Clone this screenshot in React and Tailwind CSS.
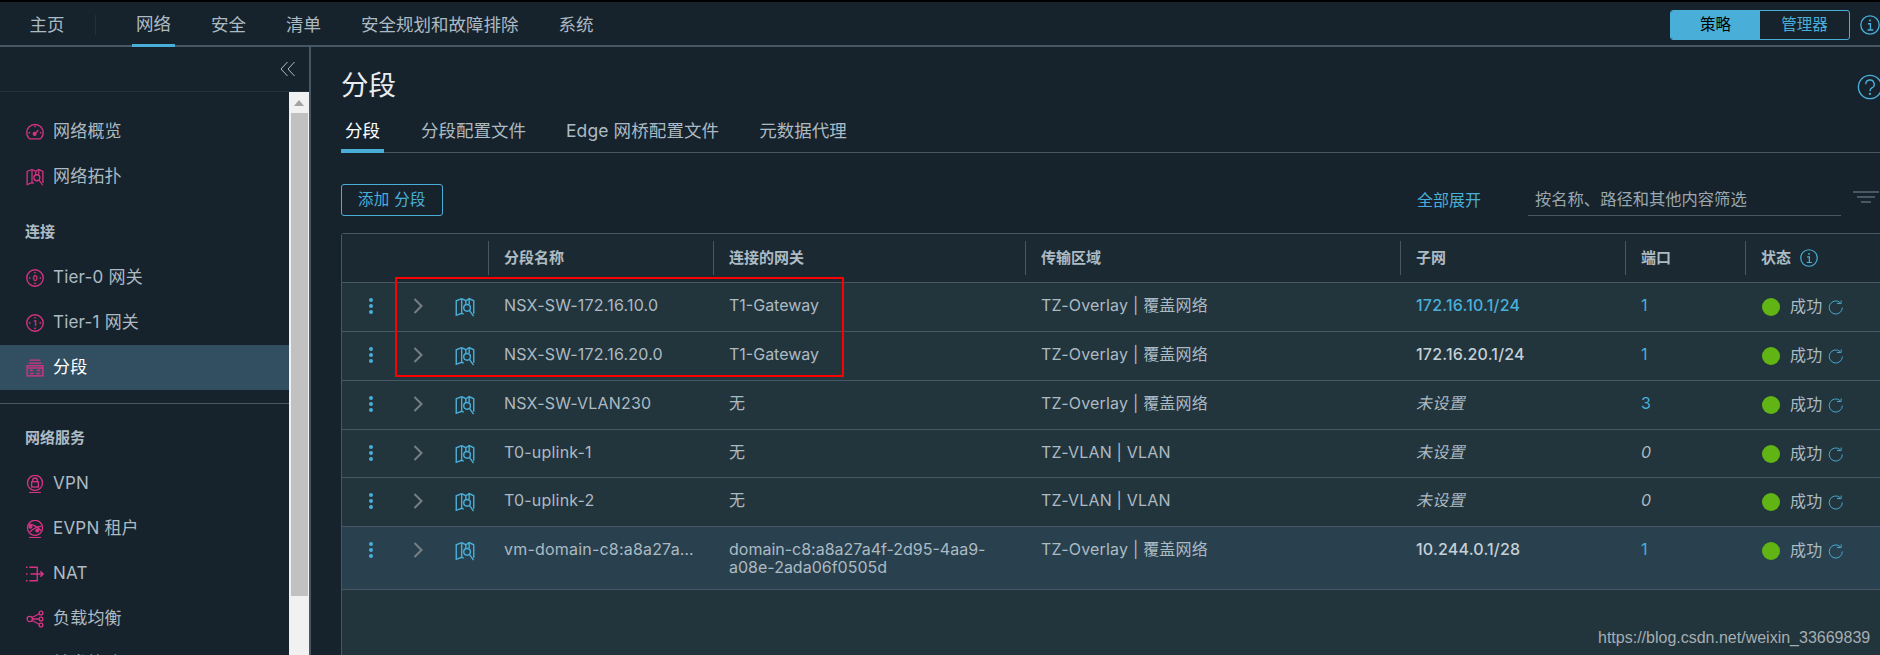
import React from "react";

function Svg({ className, children, strokeWidth = 1.8 }) {
  return (
    <svg viewBox="0 0 24 24" fill="none" stroke="currentColor" strokeWidth={strokeWidth} className={className}>
      {children}
    </svg>
  );
}

function MapIcon({ className }) {
  return (
    <Svg className={className} strokeWidth={1.7}>
      <path d="M8 2 1.500 4.500v17.500L8 19.500l2.500 1" />
      <path d="M8 2v17.500" />
      <path d="M8 2l5 2.500L17 2l5.500 2.500v15.500" />
      <path d="M13 4.500v4" />
      <path d="M17 2v6.500" />
      <circle cx="14.500" cy="13" r="4" />
      <path d="M17.300 16l5 7" />
    </Svg>
  );
}

function GaugeIcon({ className }) {
  return (
    <Svg className={className}>
      <path d="M4 20.500a11 11 0 1 1 16 0 2 2 0 0 1-1.500.7h-13a2 2 0 0 1-1.500-.7z" />
      <path d="M12 14l4.500-4.500" />
      <circle cx="11.500" cy="14.500" r="1.800" fill="currentColor" />
      <path d="M12 3.500v2M3.500 13h2M18.500 13h2" />
    </Svg>
  );
}

function TierIcon({ className, label }) {
  return (
    <Svg className={className}>
      <circle cx="12" cy="12" r="11" />
      <text x="12" y="15.500" textAnchor="middle" fontSize="10" fontWeight="700" fill="currentColor" stroke="none">
        {label}
      </text>
      <path d="M12 3.500l-2 2.200h4zM12 20.500l-2-2.200h4zM3.500 12l2.200-2v4zM20.500 12l-2.200-2v4z" fill="currentColor" stroke="none" />
    </Svg>
  );
}

function SegmentIcon({ className }) {
  return (
    <Svg className={className}>
      <path d="M5 1.500h14M3.500 5.500h17" />
      <rect x="1.500" y="9" width="21" height="13.500" />
      <path d="M1.500 12h21" />
      <path d="M5 15.500h5M7.500 14 5 15.500M14 15.500h5M16.500 14l2.500 1.500M5 19h5M7.500 20.500 10 19M14 19h5M16.500 20.500 14 19" strokeWidth="1.300" />
    </Svg>
  );
}

function VpnIcon({ className }) {
  return (
    <Svg className={className}>
      <circle cx="12" cy="10.500" r="10" />
      <rect x="7.500" y="9" width="9" height="7" />
      <path d="M9 9V7a3 3 0 0 1 6 0v2" />
      <path d="M4 23.500h16" />
    </Svg>
  );
}

function GlobeIcon({ className }) {
  return (
    <Svg className={className}>
      <circle cx="12" cy="10.500" r="10" />
      <path d="M4 5.500c5 0 12 4 16 9M5 16c4-4 9-7 15-7.500" />
      <circle cx="6" cy="9" r="1.800" fill="currentColor" />
      <circle cx="15" cy="14" r="1.800" fill="currentColor" />
      <path d="M4 23.500h16" />
    </Svg>
  );
}

function NatIcon({ className }) {
  return (
    <Svg className={className}>
      <path d="M0 3h2M0 12h2M0 21h2" />
      <path d="M4.500 3H15v18H4.500M6 12h17M19 8.500 23 12l-4 3.500" />
    </Svg>
  );
}

function BalanceIcon({ className }) {
  return (
    <Svg className={className}>
      <circle cx="5" cy="12" r="3.500" />
      <circle cx="20" cy="4" r="2.500" />
      <circle cx="20" cy="12" r="2.500" />
      <circle cx="20" cy="20" r="2.500" />
      <path d="M8 10l9.800-5M8.500 12h9M8 14l9.800 5" />
    </Svg>
  );
}

function Info({ className }) {
  return (
    <svg viewBox="0 0 24 24" fill="none" stroke="#49afd9" strokeWidth="1.600" className={className}>
      <circle cx="12" cy="12" r="11" />
      <path d="M9.500 10.500H12.500V18M9 18h7" />
      <circle cx="12" cy="6.500" r="1.200" fill="#49afd9" stroke="none" />
    </svg>
  );
}

function Refresh() {
  return (
    <svg viewBox="0 0 16 16" fill="none" stroke="#49afd9" strokeWidth="1" className="ml-[6px] mt-[2px] h-[15px] w-[15px] shrink-0">
      <path d="M13 2.800A7 7 0 1 0 15.300 8" />
      <path d="M9.500 3.800h4.500V0.500" />
    </svg>
  );
}

function NavItem({ icon, label, active }) {
  return (
    <div
      className={
        "flex h-[45px] items-center gap-[9px] pl-[26px] text-[17px] tracking-[0.2px] " +
        (active ? "bg-[#324f62] text-white" : "text-[#acbac3]")
      }
    >
      <span className="flex h-[18px] w-[18px] shrink-0 items-center justify-center text-[#d63384]">{icon}</span>
      <span>{label}</span>
    </div>
  );
}

function SectionTitle({ children }) {
  return <div className="flex h-[56px] items-center pl-[25px] pt-[10px] text-[15px] font-bold text-[#adbbc4]">{children}</div>;
}

const rows = [
  { name: "NSX-SW-172.16.10.0", gateway: "T1-Gateway", zone: "TZ-Overlay | 覆盖网络", subnet: "172.16.10.1/24", link: true, ports: "1", height: "h-[49px]" },
  { name: "NSX-SW-172.16.20.0", gateway: "T1-Gateway", zone: "TZ-Overlay | 覆盖网络", subnet: "172.16.20.1/24", ports: "1", height: "h-[49px]" },
  { name: "NSX-SW-VLAN230", gateway: "无", zone: "TZ-Overlay | 覆盖网络", subnet: "未设置", unset: true, ports: "3", height: "h-[49px]" },
  { name: "T0-uplink-1", gateway: "无", zone: "TZ-VLAN | VLAN", subnet: "未设置", unset: true, ports: "0", height: "h-[48px]" },
  { name: "T0-uplink-2", gateway: "无", zone: "TZ-VLAN | VLAN", subnet: "未设置", unset: true, ports: "0", height: "h-[49px]" },
  {
    name: "vm-domain-c8:a8a27a…",
    gateway: "domain-c8:a8a27a4f-2d95-4aa9-a08e-2ada06f0505d",
    zone: "TZ-Overlay | 覆盖网络",
    subnet: "10.244.0.1/28",
    ports: "1",
    selected: true,
    height: "h-[63px]",
  },
];

const cols = "grid grid-cols-[146px_225px_312px_375px_225px_120px_1fr]";

function Row({ row }) {
  return (
    <div className={cols + " border-b border-[#485764] text-[16px] leading-[18px] tracking-[0.2px] text-[#acbac3] " + row.height + (row.selected ? " bg-[#29414e]" : "")}>
      <div className="flex items-start pt-[14px]">
        <span className="ml-[27px] flex h-[18px] w-[4px] flex-col justify-between py-[1px]">
          <i className="h-[4px] w-[4px] rounded-full bg-[#49afd9]" />
          <i className="h-[4px] w-[4px] rounded-full bg-[#49afd9]" />
          <i className="h-[4px] w-[4px] rounded-full bg-[#49afd9]" />
        </span>
        <svg viewBox="0 0 10 16" fill="none" stroke="#777f85" strokeWidth="2" className="ml-[40px] mt-[1px] h-[16px] w-[10px]">
          <path d="M1.500 1 8.500 8l-7 7" />
        </svg>
        <MapIcon className="ml-[32px] h-[20px] w-[20px] text-[#49afd9]" />
      </div>
      <div className="pl-[16px] pt-[13px]">{row.name}</div>
      <div className="pl-[16px] pr-[30px] pt-[13px] tracking-normal [overflow-wrap:anywhere]">{row.gateway}</div>
      <div className="pl-[16px] pt-[13px]">{row.zone}</div>
      <div
        className={
          "pl-[16px] pt-[13px] " +
          (row.link ? "font-medium text-[#49afd9]" : row.unset ? "italic" : "font-medium text-[#c5d0d6]")
        }
      >
        {row.subnet}
      </div>
      <div className={"pl-[16px] pt-[13px] " + (row.ports === "0" ? "italic" : "text-[#49afd9]")}>{row.ports}</div>
      <div className="flex items-start pl-[17px] pt-[15px]">
        <span className="h-[18px] w-[18px] shrink-0 rounded-full bg-[#60b515]" />
        <span className="-mt-[1px] ml-[10px]">成功</span>
        <Refresh />
      </div>
    </div>
  );
}

export default function App() {
  return (
    <div className="relative flex h-[655px] w-[1880px] flex-col overflow-hidden border-t-2 border-black bg-[#17232c] font-['Inter','Noto_Sans_CJK_SC',sans-serif]">
      <header className="flex h-[45px] shrink-0 items-stretch border-b-2 border-[#485764] pt-[3px] text-[17.500px] text-[#acbac3]">
        <div className="flex w-[95px] items-center justify-center pr-[1px]">
          <span>主页</span>
        </div>
        <div className="my-[10px] w-px bg-[#22303a]" />
        <nav className="ml-[36px] flex gap-[40px]">
          <div className="-mb-[2px] -mr-[4px] flex items-center border-b-[3px] border-[#49afd9] px-[4px]">网络</div>
          <div className="flex items-center">安全</div>
          <div className="flex items-center">清单</div>
          <div className="flex items-center">安全规划和故障排除</div>
          <div className="flex items-center">系统</div>
        </nav>
        <div className="ml-auto flex items-center">
          <div className="flex h-[30px] w-[180px] overflow-hidden rounded-[3px] border border-[#49afd9] text-[15.500px]">
            <div className="flex w-[89px] items-center justify-center bg-[#49afd9] text-black">策略</div>
            <div className="flex flex-1 items-center justify-center text-[#49afd9]">管理器</div>
          </div>
          <Info className="ml-[10px] h-[20px] w-[20px] shrink-0" />
        </div>
      </header>

      <div className="flex min-h-0 flex-1">
        <aside className="flex w-[311px] shrink-0 flex-col border-r-2 border-[#485764]">
          <div className="flex h-[45px] shrink-0 items-center justify-end border-b border-[#22303a] pr-[13px]">
            <svg viewBox="0 0 16 16" fill="none" stroke="#acbac3" strokeWidth="1" className="h-[16px] w-[16px]">
              <path d="M7.500 1 1 8l6.500 7M14.500 1 8 8l6.500 7" />
            </svg>
          </div>
          <div className="flex min-h-0 flex-1">
            <nav className="min-w-0 flex-1 pt-[17px]">
              <NavItem label="网络概览" icon={<GaugeIcon className="h-[18px] w-[18px]" />} />
              <NavItem label="网络拓扑" icon={<MapIcon className="h-[18px] w-[18px]" />} />
              <SectionTitle>连接</SectionTitle>
              <NavItem label="Tier-0 网关" icon={<TierIcon label="0" className="h-[18px] w-[18px]" />} />
              <NavItem label="Tier-1 网关" icon={<TierIcon label="1" className="h-[18px] w-[18px]" />} />
              <NavItem active label="分段" icon={<SegmentIcon className="h-[18px] w-[18px]" />} />
              <div className="mb-px mt-[13px] border-b border-[#485764]" />
              <SectionTitle>网络服务</SectionTitle>
              <NavItem label="VPN" icon={<VpnIcon className="h-[18px] w-[18px]" />} />
              <NavItem label="EVPN 租户" icon={<GlobeIcon className="h-[18px] w-[18px]" />} />
              <NavItem label="NAT" icon={<NatIcon className="h-[18px] w-[18px]" />} />
              <NavItem label="负载均衡" icon={<BalanceIcon className="h-[18px] w-[18px]" />} />
              <NavItem label="转发策略" icon={<MapIcon className="h-[18px] w-[18px]" />} />
            </nav>
            <div className="flex w-[20px] shrink-0 flex-col items-center bg-[#f1f1f1]">
              <div className="flex h-[21px] items-center justify-center">
                <span className="h-0 w-0 border-x-[5px] border-b-[6px] border-x-transparent border-b-[#a3a3a3]" />
              </div>
              <div className="h-[483px] w-[17px] bg-[#c1c1c1]" />
            </div>
          </div>
        </aside>

        <main className="flex min-w-0 flex-1 flex-col pl-[30px]">
          <div className="flex h-[57px] shrink-0 items-end justify-between">
            <h1 className="text-[27.500px] font-normal leading-[38px] text-[#eaedf0]">分段</h1>
            <svg viewBox="0 0 28 28" fill="none" stroke="#49afd9" strokeWidth="1.500" className="mb-[4px] mr-[-3px] h-[26px] w-[26px]">
              <circle cx="14" cy="14" r="12.500" />
              <path d="M9.500 11a4.500 4.500 0 1 1 6.500 4c-1.500.8-2 1.500-2 3.500" />
              <circle cx="14" cy="21.500" r="1.200" fill="#49afd9" stroke="none" />
            </svg>
          </div>
          <div className="flex h-[49px] shrink-0 items-stretch border-b border-[#485764] text-[17.500px] text-[#acbac3]">
            <div className="-mb-px flex w-[43px] items-center justify-center border-b-4 border-[#49afd9] pt-[10px] text-white">分段</div>
            <div className="ml-[37px] flex items-center pt-[7px]">分段配置文件</div>
            <div className="ml-[40px] flex items-center pt-[7px] tracking-[0.1px]">Edge 网桥配置文件</div>
            <div className="ml-[40px] flex items-center pt-[7px]">元数据代理</div>
          </div>
          <div className="mt-[31px] flex h-[32px] shrink-0 items-center">
            <button className="flex h-[32px] w-[102px] items-center justify-center rounded-[3px] border border-[#49afd9] text-[15.500px] tracking-[0.3px] text-[#49afd9]">添加 分段</button>
            <span className="ml-[974px] text-[16px] text-[#49afd9]">全部展开</span>
            <div className="ml-[47px] flex h-[32px] w-[313px] items-center border-b border-[#485764] pl-[7px] text-[16.300px] text-[#9ba7ae]">
              按名称、路径和其他内容筛选
            </div>
            <div className="ml-[12px] flex w-[26px] shrink-0 flex-col items-center gap-[3px] self-start pt-[7px]">
              <i className="h-[2px] w-[26px] bg-[#485764]" />
              <i className="h-[2px] w-[18px] bg-[#485764]" />
              <i className="h-[2px] w-[10px] bg-[#485764]" />
            </div>
          </div>
          <div className="mt-[17px] flex min-h-0 flex-1 flex-col rounded-tl-[3px] border-l border-t border-[#485764] bg-[#22343c]">
            <div className={cols + " h-[49px] shrink-0 items-center border-b border-[#485764] bg-[#1b2a32] text-[15px] font-bold text-[#adbbc4]"}>
              <div />
              {["分段名称", "连接的网关", "传输区域", "子网", "端口"].map((title) => (
                <div key={title} className="flex h-[34px] items-center border-l border-[#485764] pl-[15px]">
                  {title}
                </div>
              ))}
              <div className="flex h-[34px] items-center gap-[9px] border-l border-[#485764] pl-[15px]">
                状态
                <Info className="h-[18px] w-[18px]" />
              </div>
            </div>
            {rows.map((row) => (
              <Row key={row.name} row={row} />
            ))}
          </div>
        </main>
      </div>

      <div className="absolute left-[395px] top-[275px] h-[100px] w-[449px] border-2 border-[#ff0000]" />
      <div className="absolute left-[1598px] top-[624px] font-['Liberation_Sans',sans-serif] text-[16px] text-[#a5aeb2]">
        https://blog.csdn.net/weixin_33669839
      </div>
    </div>
  );
}
